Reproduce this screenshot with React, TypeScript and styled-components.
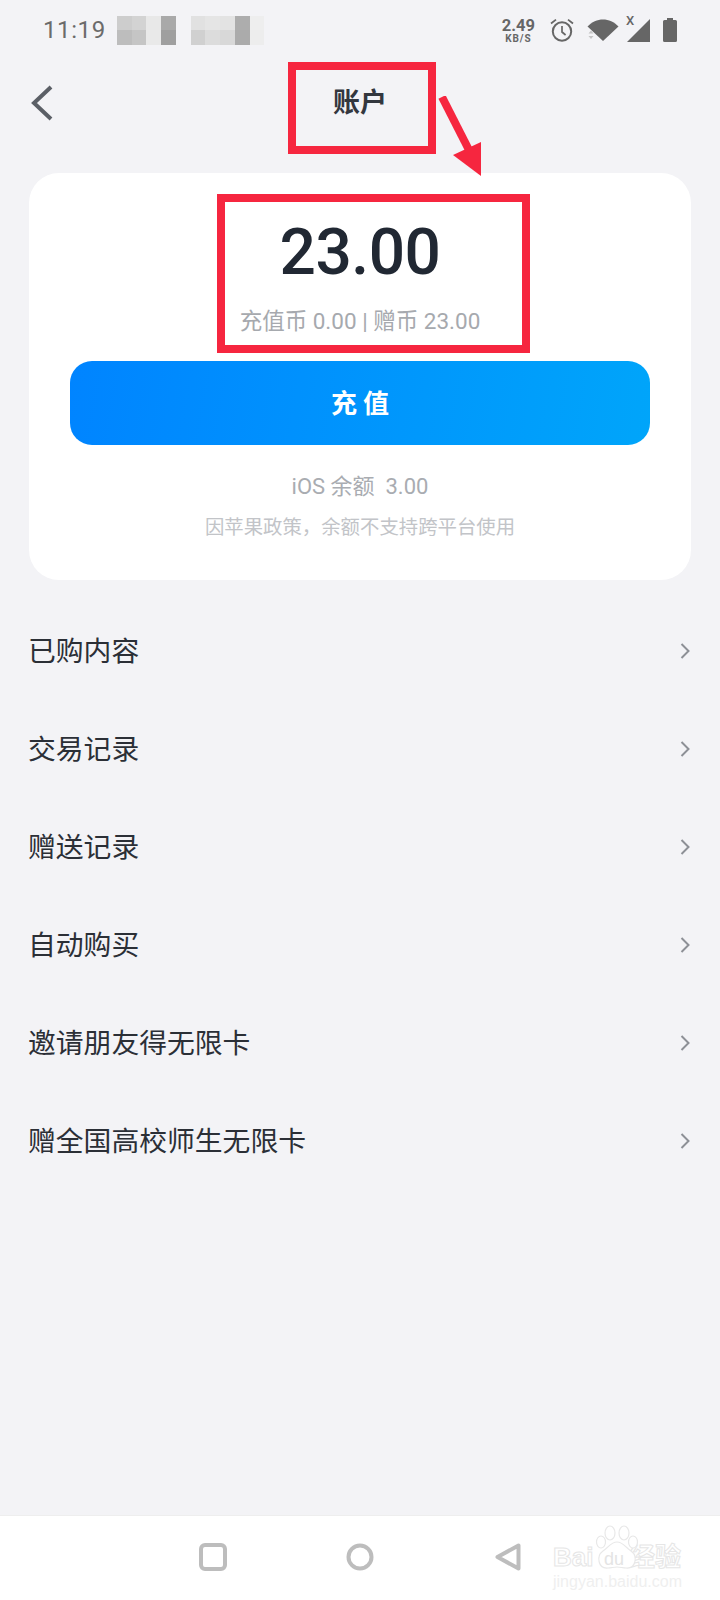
import React from "react";
import styled, { createGlobalStyle } from "styled-components";

const GlobalStyle = createGlobalStyle`
  html, body {
    margin: 0;
    padding: 0;
    background: #f3f3f6;
  }
`;

const mosaicLeft = ["#cdcdcd", "#d3d3d3", "#e8e8e8", "#a9a9a9", "#bdbdbd", "#c5c5c5", "#e9e9e9", "#9f9f9f"];
const mosaicRight = ["#e1e1e1", "#e5e5e5", "#e3e3e3", "#adadad", "#eeeeee", "#d0d0d0", "#dcdcdc", "#d8d8d8", "#ababab", "#ededed"];
const menuItems = ["已购内容", "交易记录", "赠送记录", "自动购买", "邀请朋友得无限卡", "赠全国高校师生无限卡"];

export default function App() {
    return <Page>
        <GlobalStyle/>
        <StatusBar>
            <Time>11:19</Time>
            <Mosaic $cols={4}>
                {mosaicLeft.map((c, i) => <MosaicCell key={i} $color={c}/>)}
            </Mosaic>
            <Mosaic $cols={5}>
                {mosaicRight.map((c, i) => <MosaicCell key={i} $color={c}/>)}
            </Mosaic>
            <StatusRight>
                <Speed>
                    <SpeedValue>2.49</SpeedValue>
                    <SpeedUnit>KB/S</SpeedUnit>
                </Speed>
                <AlarmIcon width="26" height="26" viewBox="0 0 26 26" fill="none" stroke="#666" strokeWidth="2">
                    <circle cx="13" cy="14.5" r="9.2"/>
                    <path d="M13 9v6l3.6 3" strokeWidth="1.7"/>
                    <path d="M2 6.5 7 2.6M24 6.5 19 2.6" strokeWidth="1.8"/>
                </AlarmIcon>
                <svg width="32" height="24" viewBox="0 0 32 24">
                    <path d="M0.5 8.5C9 -1 23 -1 31.5 8.5L16 23Z" fill="#666"/>
                    <path d="M1.500 15.500 4 12.500 6.500 15.500ZM1.500 18 4 21 6.500 18Z" fill="#c4c4c4"/>
                </svg>
                <SignalWrap>
                    <SignalX>X</SignalX>
                    <svg width="23" height="23" viewBox="0 0 23 23">
                        <path d="M23 0V23H0Z" fill="#666"/>
                    </svg>
                </SignalWrap>
                <svg width="14" height="24" viewBox="0 0 14 24">
                    <path d="M4 0h6v2h2.500A1.500 1.500 0 0 1 14 3.500v19a1.500 1.500 0 0 1-1.500 1.500h-11A1.500 1.500 0 0 1 0 22.500v-19A1.500 1.500 0 0 1 1.500 2H4Z" fill="#666"/>
                </svg>
            </StatusRight>
        </StatusBar>

        <Header>
            <BackButton>
                <svg width="24" height="36" viewBox="0 0 24 36" fill="none" stroke="#5b5f66" strokeWidth="4">
                    <path d="M21 2 4 18l17 16"/>
                </svg>
            </BackButton>
            <Title>账户</Title>
        </Header>

        <Card>
            <Amount>23.00</Amount>
            <AmountDetail>充值币 0.00 | 赠币 23.00</AmountDetail>
            <RechargeButton>充值</RechargeButton>
            <IosBalance>iOS 余额&nbsp;&nbsp;3.00</IosBalance>
            <Notice>因苹果政策，余额不支持跨平台使用</Notice>
        </Card>

        <Menu>
            {menuItems.map(item => <MenuRow key={item}>
                <MenuLabel>{item}</MenuLabel>
                <Chevron width="10" height="16" viewBox="0 0 10 16" fill="none" stroke="#8d9096" strokeWidth="2">
                    <path d="M1.500 1 8.500 8l-7 7"/>
                </Chevron>
            </MenuRow>)}
        </Menu>

        <NavBar>
            <svg width="28" height="28" viewBox="0 0 28 28" fill="none" stroke="#bdbdbd" strokeWidth="4">
                <rect x="2" y="2" width="24" height="24" rx="4"/>
            </svg>
            <svg width="28" height="28" viewBox="0 0 28 28" fill="none" stroke="#bdbdbd" strokeWidth="4">
                <circle cx="14" cy="14" r="11.500"/>
            </svg>
            <BackTriangle width="26" height="28" viewBox="0 0 26 28" fill="none" stroke="#bdbdbd" strokeWidth="4" strokeLinejoin="round">
                <path d="M23.500 2.500V25.500L2.500 14Z"/>
            </BackTriangle>
        </NavBar>

        <Watermark>
            <WatermarkBrand>
                <span>Bai</span>
                <span>经验</span>
            </WatermarkBrand>
            <WatermarkUrl>jingyan.baidu.com</WatermarkUrl>
            <Paw>
                <svg width="44" height="50" viewBox="0 0 44 50" fill="#fff" stroke="#e8e8e8" strokeWidth="1.200">
                    <ellipse cx="15" cy="8" rx="5" ry="7"/>
                    <ellipse cx="29" cy="8" rx="5" ry="7"/>
                    <ellipse cx="6" cy="17" rx="4.500" ry="6"/>
                    <ellipse cx="38" cy="17" rx="4.500" ry="6"/>
                    <path d="M22 17c6 0 8 5 14 9 7 5 5 18-5 17-3 0-6-1-9-1s-6 1-9 1c-10 1-12-12-5-17 6-4 8-9 14-9Z"/>
                </svg>
                <PawText>du</PawText>
            </Paw>
        </Watermark>

        <TitleMark/>
        <AmountMark/>
        <Arrow width="60" height="90" viewBox="0 0 60 90">
            <path d="M5 1 33 56" stroke="#f6263f" strokeWidth="8" fill="none"/>
            <path d="M44 46V80L16 59Z" fill="#f6263f"/>
        </Arrow>
    </Page>;
}

const Page = styled.div`
  position: relative;
  display: flex;
  flex-direction: column;
  width: 720px;
  height: 1600px;
  overflow: hidden;
  background: #f3f3f6;
  font-family: "Noto Sans CJK SC", "Noto Sans", sans-serif;
`;
const StatusBar = styled.div`
  display: flex;
  align-items: center;
  height: 60px;
  padding: 0 43px;
  box-sizing: border-box;
`;
const Time = styled.div`
  width: 74px;
  color: #6b6b6b;
  font-family: Roboto, sans-serif;
  font-size: 24px;
  letter-spacing: 0.6px;
`;
const Mosaic = styled.div<{ $cols: number }>`
  display: grid;
  grid-template-columns: repeat(${p => p.$cols}, 14.7px);
  grid-auto-rows: 14.500px;
  margin-right: 15px;
`;
const MosaicCell = styled.div<{ $color: string }>`
  background: ${p => p.$color};
`;
const StatusRight = styled.div`
  display: flex;
  align-items: center;
  gap: 10px;
  margin-left: auto;
`;
const Speed = styled.div`
  display: flex;
  flex-direction: column;
  align-items: center;
  color: #666;
  font-family: Roboto, sans-serif;
  font-weight: 700;
  margin-right: 4px;
`;
const SpeedValue = styled.div`
  font-size: 16.500px;
  line-height: 17px;
`;
const SpeedUnit = styled.div`
  font-size: 10px;
  line-height: 10px;
  letter-spacing: 0.9px;
`;
const AlarmIcon = styled.svg`
  margin-right: 2px;
`;
const SignalWrap = styled.div`
  position: relative;
  display: flex;
  margin: 0 3px 0 -2px;
`;
const SignalX = styled.div`
  position: absolute;
  left: -1px;
  top: -6px;
  color: #666;
  font-family: Roboto, sans-serif;
  font-weight: 500;
  font-size: 13px;
`;
const Header = styled.div`
  position: relative;
  display: flex;
  align-items: center;
  justify-content: center;
  height: 80px;
  margin-bottom: 33px;
`;
const BackButton = styled.div`
  position: absolute;
  left: 30px;
  top: 25px;
  display: flex;
`;
const Title = styled.div`
  color: #33373e;
  font-size: 27px;
  font-weight: 700;
  line-height: 80px;
  margin-top: 2px;
`;
const Card = styled.div`
  display: flex;
  flex-direction: column;
  align-items: center;
  height: 407px;
  margin: 0 29px;
  padding: 44px 41px 0;
  box-sizing: border-box;
  background: #ffffff;
  border-radius: 30px;
`;
const Amount = styled.div`
  color: #212833;
  font-family: Roboto, sans-serif;
  font-size: 64px;
  font-weight: 500;
  line-height: 72px;
  letter-spacing: -0.5px;
`;
const AmountDetail = styled.div`
  color: #a6a9ae;
  font-size: 22.500px;
  line-height: 30px;
  margin-top: 17px;
  font-family: Roboto, "Noto Sans CJK SC", sans-serif;
`;
const RechargeButton = styled.div`
  display: flex;
  align-items: center;
  justify-content: center;
  align-self: stretch;
  height: 84px;
  margin-top: 25px;
  padding: 0 0 3px 6px;
  box-sizing: border-box;
  background: linear-gradient(100deg, #0084ff, #00a5fa);
  border-radius: 22px;
  color: #ffffff;
  font-size: 26px;
  font-weight: 700;
  letter-spacing: 6px;
`;
const IosBalance = styled.div`
  color: #a9acb1;
  font-size: 22px;
  line-height: 30px;
  margin-top: 27px;
  font-family: Roboto, "Noto Sans CJK SC", sans-serif;
`;
const Notice = styled.div`
  color: #c2c4c8;
  font-size: 19.400px;
  line-height: 28px;
  margin-top: 10px;
`;
const Menu = styled.div`
  display: flex;
  flex-direction: column;
  padding: 21px 29px 0 28px;
`;
const MenuRow = styled.div`
  display: flex;
  align-items: center;
  justify-content: space-between;
  height: 98px;
`;
const MenuLabel = styled.div`
  color: #2b2f36;
  font-size: 27.800px;
  margin-bottom: 2px;
`;
const Chevron = styled.svg`
  margin: 2px 1px 0 0;
`;
const NavBar = styled.div`
  display: flex;
  align-items: center;
  gap: 119px;
  height: 85px;
  margin-top: auto;
  padding-left: 199px;
  padding-bottom: 3px;
  box-sizing: border-box;
  background: #ffffff;
  border-top: 1px solid #eeeeee;
`;
const BackTriangle = styled.svg`
  margin-left: 2px;
`;
const Watermark = styled.div`
  position: absolute;
  left: 553px;
  top: 1525px;
  display: flex;
  flex-direction: column;
  width: 128px;
  padding-top: 17px;
`;
const WatermarkBrand = styled.div`
  display: flex;
  justify-content: space-between;
  color: #ffffff;
  -webkit-text-stroke: 1px #e6e6e6;
  font-family: "Liberation Sans", "Noto Sans CJK SC", sans-serif;
  font-size: 26px;
  font-weight: 700;
  line-height: 30px;
`;
const WatermarkUrl = styled.div`
  color: #efefef;
  font-family: "Liberation Sans", sans-serif;
  font-size: 16px;
  line-height: 18px;
  margin-top: 1px;
`;
const Paw = styled.div`
  position: absolute;
  left: 42px;
  top: 0;
  display: flex;
`;
const PawText = styled.div`
  position: absolute;
  left: 9px;
  top: 24px;
  color: #e4e4e4;
  font-family: "Liberation Sans", sans-serif;
  font-size: 18px;
  line-height: 20px;
`;
const TitleMark = styled.div`
  position: absolute;
  left: 288px;
  top: 62px;
  width: 148px;
  height: 92px;
  box-sizing: border-box;
  border: 8px solid #f6263f;
`;
const AmountMark = styled.div`
  position: absolute;
  left: 217px;
  top: 194px;
  width: 313px;
  height: 159px;
  box-sizing: border-box;
  border: 8px solid #f6263f;
`;
const Arrow = styled.svg`
  position: absolute;
  left: 437px;
  top: 96px;
`;
